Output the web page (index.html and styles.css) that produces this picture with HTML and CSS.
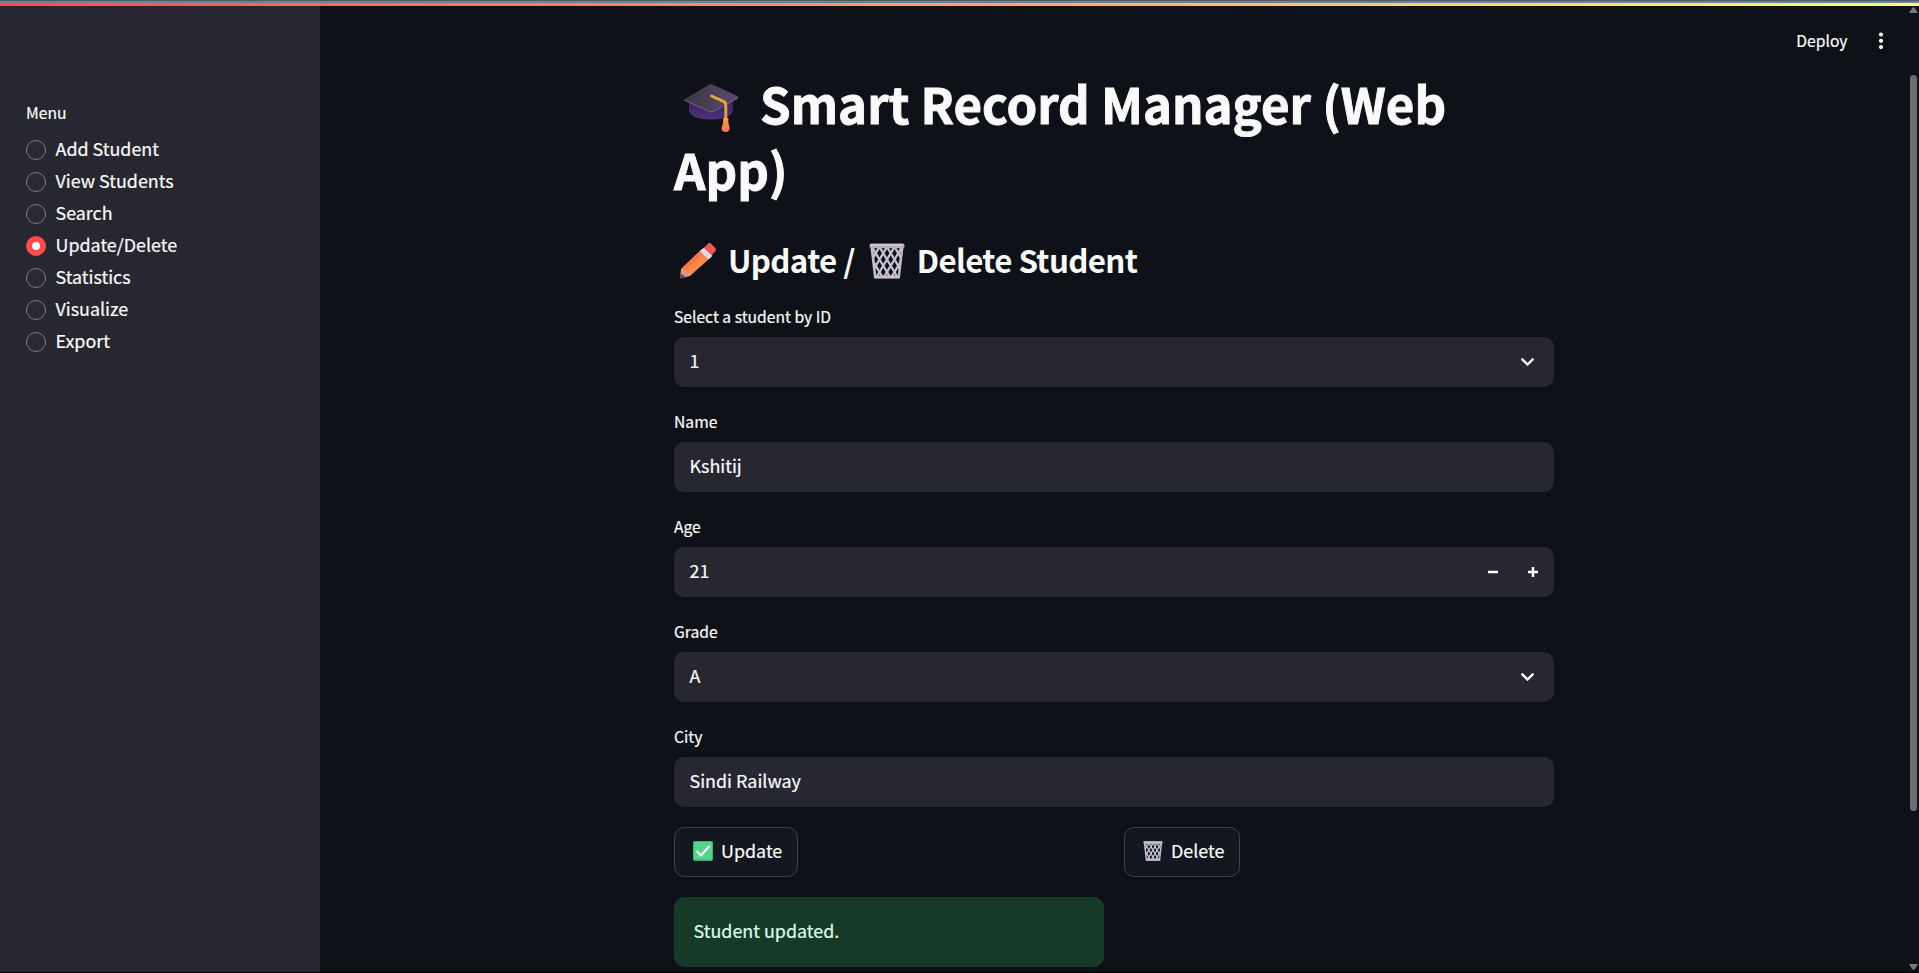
FILE: index.html
```html
<!DOCTYPE html>
<html lang="en">
<head>
<meta charset="utf-8">
<title>Smart Record Manager</title>
<link rel="stylesheet" href="styles.css">
</head>
<body>
<svg class="defs" width="0" height="0" aria-hidden="true">
  <defs>
    <linearGradient id="binFill" x1="0" y1="0" x2="1" y2="1"><stop offset="0" stop-color="#c9c3d0"/><stop offset="1" stop-color="#b7aec6"/></linearGradient>
    <linearGradient id="capTop" x1="0" y1="0" x2="1" y2="0"><stop offset="0" stop-color="#3b3440"/><stop offset="1" stop-color="#5b4a70"/></linearGradient>
    <linearGradient id="capBase" x1="0" y1="0" x2="0" y2="1"><stop offset="0" stop-color="#35264f"/><stop offset="1" stop-color="#50307c"/></linearGradient>
    <linearGradient id="tassel" x1="0" y1="0" x2="0" y2="1"><stop offset="0" stop-color="#f9a23c"/><stop offset="1" stop-color="#ff6f5c"/></linearGradient>
    <linearGradient id="wood" x1="0" y1="0" x2="1" y2="1"><stop offset="0" stop-color="#ff7044"/><stop offset="1" stop-color="#ffa044"/></linearGradient>
    <clipPath id="binClip"><path d="M2 4h32l-4 30H6z"/></clipPath>
    <symbol id="bin" viewBox="0 0 36 36">
      <path d="M2.800 4.500 6.200 34h23.600l3.400-29.500" fill="none" stroke="url(#binFill)" stroke-width="2.600"/>
      <g clip-path="url(#binClip)" fill="none" stroke="#c6bfd0" stroke-width="2.300">
        <path d="M-12 4 6 34M-4.500 4l18 30M3 4l18 30M10.500 4l18 30M18 4l18 30M25.500 4l18 30"/>
        <path d="M48 4 30 34M40.500 4l-18 30M33 4 15 34M25.500 4l-18 30M18 4 0 34M10.500 4l-18 30"/>
      </g>
      <rect x="5" y="32.500" width="26" height="3" rx="1.400" fill="#c8bdd6"/>
      <rect x=".5" y=".5" width="35" height="4.800" rx="2" fill="#b4aebb"/>
      <rect x="1.500" y="1" width="33" height="2" rx="1" fill="#cbc5d0"/>
    </symbol>
  </defs>
</svg>
<div class="top-strip"></div>
<div class="app">
  <aside class="sidebar">
    <div class="menu-title">Menu</div>
    <ul class="menu">
      <li><i class="radio"></i><span>Add Student</span></li>
      <li><i class="radio"></i><span>View Students</span></li>
      <li><i class="radio"></i><span>Search</span></li>
      <li><i class="radio checked"></i><span>Update/Delete</span></li>
      <li><i class="radio"></i><span>Statistics</span></li>
      <li><i class="radio"></i><span>Visualize</span></li>
      <li><i class="radio"></i><span>Export</span></li>
    </ul>
  </aside>
  <main class="main">
    <header class="toolbar">
      <span class="deploy">Deploy</span>
      <svg class="dots" viewBox="0 0 6 18"><circle cx="3" cy="2.500" r="2.100"/><circle cx="3" cy="8.800" r="2.100"/><circle cx="3" cy="15.100" r="2.100"/></svg>
    </header>
    <div class="content">
      <h1><svg class="cap" viewBox="0 0 54 49">
        <path d="M5 16v10c0 6 9 9.500 20 9.500h4c12 0 20-4 20-10V14z" fill="url(#capBase)"/>
        <path d="M0 15.500 25 .8q2-1 4 0L53.500 12q1 1.400 0 3L30 27.500q-3 1.500-5.500 0L.5 17z" fill="url(#capTop)"/>
        <path d="M.5 16 24.500 27q3 1.300 5.500 0L53.500 14" fill="none" stroke="#6a5a78" stroke-width="1.200"/>
        <path d="m27.500 12 12 5.300q2.300 1 2.300 3.800V37" fill="none" stroke="#e3a637" stroke-width="2.900" stroke-linecap="round"/>
        <path d="M39 34.500q2.800-1.500 5.600 0l-.4 3.500 1.400 6q0 4-4 4t-4-4l1.600-6z" fill="url(#tassel)"/>
      </svg>Smart Record Manager (Web<br>App)</h1>
      <h2><svg class="pencil" viewBox="0 0 36 36">
        <path d="M1 26 22 6l9 8L10 33z" fill="url(#wood)"/>
        <path d="M2 25 22 6l3 3L5 28z" fill="#ff7548"/>
        <path d="m1 26-.8 8.200Q.2 35.500 1.500 35.300L10 33q0-2.500-3-3-1-4-6-4z" fill="#d49b83"/>
        <path d="m.5 31-.4 3.200Q.1 35.600 1.500 35.400L5 34.700q-.5-3-4.500-3.700z" fill="#713c55"/>
        <path d="m20 8 4-3.500 8.500 8.300-4 3.700z" fill="#dcd8f2"/>
        <path d="m24 4.700 4-4q1.800-1.300 3.500.3l3.800 4q1.200 1.600 0 3.200l-3.600 4z" fill="#f8554d"/>
      </svg><span class="h2-update">Update /</span><svg class="bin-large"><use href="#bin"/></svg><span class="h2-delete">Delete Student</span></h2>

      <div class="field"><div class="label">Select a student by ID</div>
        <div class="control"><span>1</span><svg class="chevron" viewBox="0 0 13 8"><path d="m1.300 1.300 5.200 5.200 5.200-5.200"/></svg></div></div>
      <div class="field"><div class="label">Name</div>
        <div class="control"><span>Kshitij</span></div></div>
      <div class="field"><div class="label">Age</div>
        <div class="control"><span>21</span><div class="stepper"><svg viewBox="0 0 10 10"><path d="M0 5h10"/></svg><svg viewBox="0 0 10 10"><path d="M0 5h10M5 0v10"/></svg></div></div></div>
      <div class="field"><div class="label">Grade</div>
        <div class="control"><span>A</span><svg class="chevron" viewBox="0 0 13 8"><path d="m1.300 1.300 5.200 5.200 5.200-5.200"/></svg></div></div>
      <div class="field"><div class="label">City</div>
        <div class="control"><span>Sindi Railway</span></div></div>

      <div class="columns">
        <div class="column">
          <div class="button update"><svg class="btn-icon" viewBox="0 0 20 20"><rect width="20" height="20" rx="1.800" fill="#38b373"/><rect x="1" y="1" width="18" height="17.500" rx="1.200" fill="#55d38c"/><path d="m4.300 10.800 3.700 3.700 8-9" fill="none" stroke="#fff" stroke-width="2" stroke-linecap="round" stroke-linejoin="round"/></svg><span>Update</span></div>
          <div class="alert"><span>Student updated.</span></div>
        </div>
        <div class="column">
          <div class="button delete"><svg class="btn-icon"><use href="#bin"/></svg><span>Delete</span></div>
        </div>
      </div>
    </div>
    <div class="scrollbar">
      <svg class="arrow" viewBox="0 0 9 6"><path d="M0 6 3.500.5h2L9 6z"/></svg>
      <div class="thumb"></div>
      <svg class="arrow" viewBox="0 0 9 6"><path d="M0 0h9L5.500 5.500h-2z"/></svg>
    </div>
  </main>
</div>
</body>
</html>
```
FILE: styles.css
```css
* { box-sizing: border-box; }
body {
  margin: 0;
  height: 973px;
  overflow: hidden;
  background: #0e1117;
  color: #fafafa;
  font: 17.9px/32px "Noto Sans CJK SC", "Noto Sans", sans-serif;
  -webkit-text-stroke: 0.2px;
  white-space: nowrap;
  display: flex;
  flex-direction: column;
  border-bottom: 1px solid #000;
}
svg { display: block; flex: none; }
.defs { position: absolute; }
.top-strip {
  flex: none;
  height: 6px;
  border-top: 1px solid #4c5c69;
  background:
    linear-gradient(#6e8290, #6e8290) 0 0 / 100% 2px no-repeat,
    linear-gradient(90deg, #ff4b4b, #ffa16d 50%, #fffd80);
}
.app { flex: 1; min-height: 0; display: flex; }

.sidebar { width: 320px; background: #262730; padding: 93px 26px 0; }
.menu-title { font-size: 15.67px; line-height: 28px; }
.menu { list-style: none; margin: 7px 0 0; padding: 0; }
.menu li { display: flex; align-items: center; gap: 9.5px; height: 32px; }
.menu span { line-height: 29px; padding-bottom: 3px; }
.radio { width: 20px; height: 20px; border-radius: 50%; border: 1px solid #7d7e85; background: #292a33; }
.radio.checked { border: 6.5px solid #ff4b4b; background: #fafafa; }

.main { flex: 1; position: relative; }
.toolbar { height: 64px; display: flex; justify-content: flex-end; align-items: center; gap: 30px; padding: 5px 35.5px 0 0; }
.deploy { font-size: 15.67px; line-height: 28px; }
.dots { width: 6px; height: 18px; fill: #fafafa; }

.content { width: 880px; margin-left: 354px; }
h1 { margin: 0; font-size: 49.2px; line-height: 66px; font-weight: 700; height: 132px; text-indent: -1px; -webkit-text-stroke: 0.9px; }
.cap { display: inline-block; width: 54px; height: 49px; margin: 0 22px 0 11px; vertical-align: -9px; }
h2 { margin: 30px 0 10px; height: 60px; display: flex; align-items: center; font-size: 31.3px; line-height: 44px; font-weight: 600; letter-spacing: -0.62px; -webkit-text-stroke: 0; }
h2 span { padding-bottom: 4px; }
.pencil { width: 36px; height: 36px; margin: 0 12px 2px 6px; }
.bin-large { width: 36px; height: 36px; margin: 0 12px 2px 14px; }

.field { height: 105px; }
.label { font-size: 15.67px; line-height: 26px; height: 35px; padding-top: 2px; }
.control { height: 50px; border-radius: 10px; background: #262730; display: flex; align-items: center; justify-content: space-between; padding: 0 20px 0 15.5px; }
.control > span { line-height: 28px; padding-bottom: 4px; }
.chevron { width: 13px; height: 8px; fill: none; stroke: #fafafa; stroke-width: 2.4; stroke-linecap: round; }
.stepper { display: flex; gap: 30px; margin-right: -4px; }
.stepper svg { width: 10px; height: 10px; stroke: #fafafa; stroke-width: 2.5; }

.columns { display: grid; grid-template-columns: 430px 430px; gap: 20px; }
.column { display: flex; flex-direction: column; align-items: flex-start; gap: 20px; }
.button { height: 50px; border: 1px solid #3e4048; border-radius: 10px; background: #131720; display: flex; align-items: center; gap: 8px; padding-left: 18px; }
.button span, .alert span { line-height: 28px; padding-bottom: 4px; }
.update { width: 124px; }
.delete { width: 116px; }
.btn-icon { width: 20px; height: 20px; margin-bottom: 2px; }
.alert { width: 430px; height: 70px; border-radius: 10px; background: #173928; color: #dffde9; display: flex; align-items: center; padding-left: 19.5px; }

.scrollbar { position: absolute; top: 0; right: 0; bottom: 1px; width: 10px; display: flex; flex-direction: column; padding: 1px 1px 1px 0; }
.arrow { width: 9px; height: 6px; fill: #77787b; }
.thumb { width: 7px; height: 736px; margin: 62px 0 auto 1px; border-radius: 4px; background: #6b6c6f; }
```
